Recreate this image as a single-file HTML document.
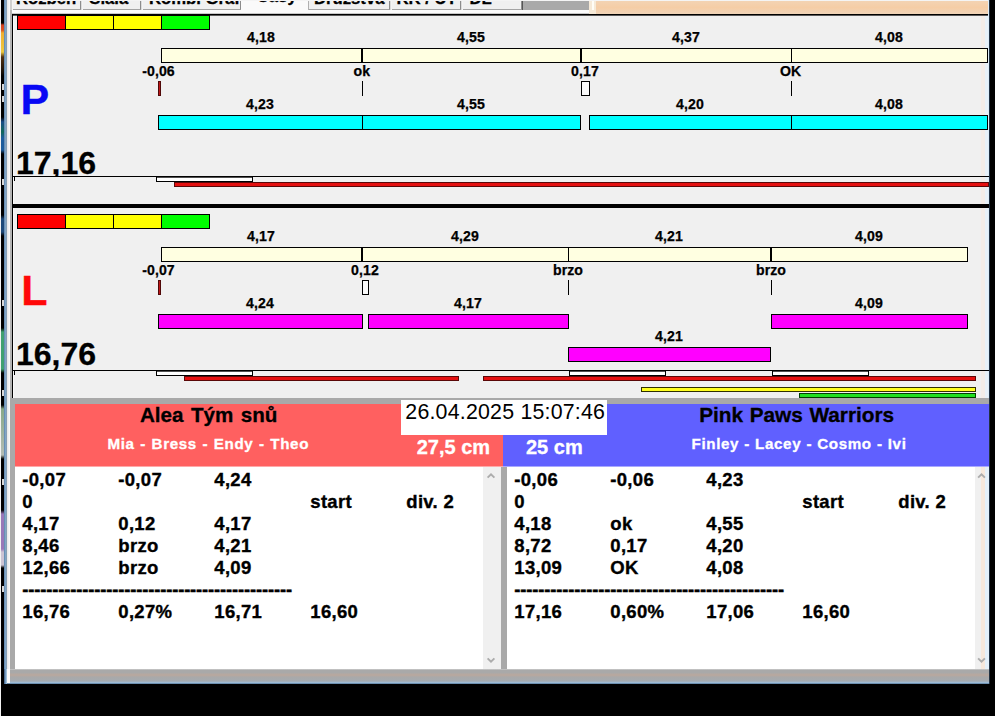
<!DOCTYPE html>
<html lang="cs"><head><meta charset="utf-8"><title>Časy</title>
<style>
html,body{margin:0;padding:0;}
body{width:995px;height:716px;position:relative;overflow:hidden;background:#f0f0f0;font-family:"Liberation Sans", Arial, sans-serif;}
.r{position:absolute;box-sizing:border-box;}
.t{position:absolute;line-height:1;white-space:pre;-webkit-text-stroke:0.3px currentColor;}
.c{position:absolute;line-height:22px;white-space:pre;font-weight:bold;font-size:18.5px;letter-spacing:0.3px;color:#000;-webkit-text-stroke:0.35px #000;}
</style></head><body>
<div class="r" style="left:0px;top:0px;width:995px;height:14px;background:#f4f4f4;"></div>
<div class="r" style="left:13px;top:0px;width:68px;height:10px;background:#f0f0f0;border-right:1px solid #8c8c8c;border-bottom:1px solid #a4a4a4;box-shadow:1px 0 0 #dcdcdc;"></div>
<div class="t" style="top:-9.04px;font-size:16.7px;color:#000;font-weight:bold;left:16.00px;">Rozběh</div>
<div class="r" style="left:83px;top:0px;width:58px;height:10px;background:#f0f0f0;border-right:1px solid #8c8c8c;border-bottom:1px solid #a4a4a4;box-shadow:1px 0 0 #dcdcdc;"></div>
<div class="t" style="top:-9.04px;font-size:16.7px;color:#000;font-weight:bold;left:89.30px;">Siala</div>
<div class="r" style="left:143px;top:0px;width:98px;height:10px;background:#f0f0f0;border-right:1px solid #8c8c8c;border-bottom:1px solid #a4a4a4;box-shadow:1px 0 0 #dcdcdc;"></div>
<div class="t" style="top:-9.04px;font-size:16.7px;color:#000;font-weight:bold;left:149.00px;">Kombi Graf</div>
<div class="r" style="left:309px;top:0px;width:81px;height:10px;background:#f0f0f0;border-right:1px solid #8c8c8c;border-bottom:1px solid #a4a4a4;box-shadow:1px 0 0 #dcdcdc;"></div>
<div class="t" style="top:-9.04px;font-size:16.7px;color:#000;font-weight:bold;left:314.00px;">Družstva</div>
<div class="r" style="left:392px;top:0px;width:69px;height:10px;background:#f0f0f0;border-right:1px solid #8c8c8c;border-bottom:1px solid #a4a4a4;box-shadow:1px 0 0 #dcdcdc;"></div>
<div class="t" style="top:-9.04px;font-size:16.7px;color:#000;font-weight:bold;left:396.50px;">KK / UT</div>
<div class="r" style="left:463px;top:0px;width:59px;height:10px;background:#f0f0f0;border-right:1px solid #8c8c8c;border-bottom:1px solid #a4a4a4;box-shadow:1px 0 0 #dcdcdc;"></div>
<div class="t" style="top:-9.04px;font-size:16.7px;color:#000;font-weight:bold;left:469.50px;">DL</div>
<div class="r" style="left:241px;top:0px;width:68px;height:14px;background:#fafafa;border-right:1px solid #b0b0b0;"></div>
<div class="t" style="top:-11.44px;font-size:16.7px;color:#000;font-weight:bold;left:256.80px;">Časy</div>
<div class="r" style="left:522px;top:1px;width:67px;height:9px;background:#a9a9a9;border-left:1px solid #555;"></div>
<div class="r" style="left:589px;top:0px;width:7px;height:14px;background:#f6ead8;"></div>
<div class="r" style="left:592px;top:1px;width:2px;height:9px;background:#fffdf6;"></div>
<div class="r" style="left:596px;top:1px;width:393px;height:13px;background:linear-gradient(#f3d3b3,#f5cda6 50%,#f0d4b8);"></div>
<div class="r" style="left:0px;top:0px;width:995px;height:1px;background:#f4f4f4;"></div>
<div class="r" style="left:12px;top:10px;width:577px;height:3px;background:#fbfbfb;"></div>
<div class="r" style="left:12px;top:13px;width:577px;height:1px;background:#c8c8c8;"></div>
<div class="r" style="left:12px;top:14px;width:977px;height:1px;background:#000;"></div>
<div class="r" style="left:12px;top:15px;width:977px;height:1px;background:#5a5a5a;"></div>
<div class="r" style="left:0px;top:0px;width:1px;height:716px;background:#f2f2f2;"></div>
<div class="r" style="left:1px;top:0px;width:3px;height:716px;background:linear-gradient(#000 0px,#000 23px,#d04020 25px,#d85020 30px,#f0b030 33px,#ecc840 52px,#503010 57px,#181008 72px,#000 76px,#000 117px,#184c88 122px,#106858 132px,#1c5c9c 138px,#1c5c9c 150px,#000 154px,#000 215px,#1c4878 219px,#1c4878 232px,#000 236px,#000 328px,#40a070 332px,#40a070 369px,#000 373px,#000 405px,#88a888 409px,#b4bcb4 455px,#000 459px,#000 510px,#9878b8 514px,#9878b8 549px,#ccc4d4 552px,#ccc4d4 565px,#000 568px,#000 716px);"></div>
<div class="r" style="left:4px;top:0px;width:3px;height:684px;background:linear-gradient(90deg,#5c84ac,#84a8c8 55%,#8898a8);"></div>
<div class="r" style="left:2px;top:84px;width:2px;height:6px;background:#d8d8d8;"></div>
<div class="r" style="left:2px;top:96px;width:2px;height:6px;background:#d8d8d8;"></div>
<div class="r" style="left:2px;top:179px;width:2px;height:6px;background:#d8d8d8;"></div>
<div class="r" style="left:2px;top:300px;width:2px;height:6px;background:#d8d8d8;"></div>
<div class="r" style="left:2px;top:390px;width:2px;height:6px;background:#d8d8d8;"></div>
<div class="r" style="left:2px;top:479px;width:2px;height:6px;background:#d8d8d8;"></div>
<div class="r" style="left:2px;top:586px;width:2px;height:6px;background:#d8d8d8;"></div>
<div class="r" style="left:7px;top:0px;width:3px;height:684px;background:linear-gradient(90deg,#e6e6e6,#fcfcfc);"></div>
<div class="r" style="left:10px;top:0px;width:2px;height:398px;background:#b4b4b4;"></div>
<div class="r" style="left:10px;top:0px;width:2px;height:10px;background:#cfcfcf;"></div>
<div class="r" style="left:12px;top:14px;width:1px;height:384px;background:#000;"></div>
<div class="r" style="left:13px;top:16px;width:1px;height:382px;background:#fafafa;"></div>
<div class="r" style="left:988px;top:0px;width:1px;height:684px;background:#dcecf8;"></div>
<div class="r" style="left:989px;top:0px;width:6px;height:716px;background:#000;"></div>
<div class="r" style="left:989px;top:0px;width:1px;height:684px;background:#203040;"></div>
<div class="r" style="left:981px;top:16px;width:4px;height:382px;background:#f3ede8;"></div>
<div class="r" style="left:985px;top:16px;width:3px;height:382px;background:#e8f1f8;"></div>
<div class="r" style="left:17px;top:15px;width:49px;height:15px;background:#ff0000;box-shadow:inset 0 0 0 1px #000;"></div>
<div class="r" style="left:65px;top:15px;width:49px;height:15px;background:#ffff00;box-shadow:inset 0 0 0 1px #000;"></div>
<div class="r" style="left:113px;top:15px;width:49px;height:15px;background:#ffff00;box-shadow:inset 0 0 0 1px #000;"></div>
<div class="r" style="left:161px;top:15px;width:49px;height:15px;background:#00ff00;box-shadow:inset 0 0 0 1px #000;"></div>
<div class="r" style="left:161px;top:48px;width:202px;height:15px;background:#ffffe1;box-shadow:inset 0 0 0 1px #000;"></div>
<div class="r" style="left:362px;top:48px;width:220px;height:15px;background:#ffffe1;box-shadow:inset 0 0 0 1px #000;"></div>
<div class="r" style="left:581px;top:48px;width:211px;height:15px;background:#ffffe1;box-shadow:inset 0 0 0 1px #000;"></div>
<div class="r" style="left:791px;top:48px;width:197px;height:15px;background:#ffffe1;box-shadow:inset 0 0 0 1px #000;"></div>
<div class="r" style="left:361px;top:48px;width:2px;height:15px;background:#000;"></div>
<div class="r" style="left:580px;top:48px;width:2px;height:15px;background:#000;"></div>
<div class="t" style="top:30.36px;font-size:14.1px;color:#000;font-weight:bold;left:61.00px;width:400px;text-align:center;letter-spacing:0.1px;-webkit-text-stroke:0.25px #000;">4,18</div>
<div class="t" style="top:30.36px;font-size:14.1px;color:#000;font-weight:bold;left:271.00px;width:400px;text-align:center;letter-spacing:0.1px;-webkit-text-stroke:0.25px #000;">4,55</div>
<div class="t" style="top:30.36px;font-size:14.1px;color:#000;font-weight:bold;left:486.00px;width:400px;text-align:center;letter-spacing:0.1px;-webkit-text-stroke:0.25px #000;">4,37</div>
<div class="t" style="top:30.36px;font-size:14.1px;color:#000;font-weight:bold;left:689.00px;width:400px;text-align:center;letter-spacing:0.1px;-webkit-text-stroke:0.25px #000;">4,08</div>
<div class="t" style="top:63.66px;font-size:14.1px;color:#000;font-weight:bold;left:-41.50px;width:400px;text-align:center;letter-spacing:0.1px;-webkit-text-stroke:0.25px #000;">-0,06</div>
<div class="t" style="top:63.66px;font-size:14.1px;color:#000;font-weight:bold;left:161.80px;width:400px;text-align:center;letter-spacing:0.1px;-webkit-text-stroke:0.25px #000;">ok</div>
<div class="t" style="top:63.66px;font-size:14.1px;color:#000;font-weight:bold;left:385.00px;width:400px;text-align:center;letter-spacing:0.1px;-webkit-text-stroke:0.25px #000;">0,17</div>
<div class="t" style="top:63.66px;font-size:14.1px;color:#000;font-weight:bold;left:590.70px;width:400px;text-align:center;letter-spacing:0.1px;-webkit-text-stroke:0.25px #000;">OK</div>
<div class="r" style="left:158px;top:81px;width:3px;height:15px;background:#c01818;box-shadow:inset 0 0 0 1px #500808;"></div>
<div class="r" style="left:362px;top:81px;width:1px;height:15px;background:#000;"></div>
<div class="r" style="left:581px;top:81px;width:9px;height:15px;background:#fafafa;box-shadow:inset 0 0 0 1px #000;"></div>
<div class="r" style="left:791px;top:81px;width:1px;height:15px;background:#000;"></div>
<div class="t" style="top:97.46px;font-size:14.1px;color:#000;font-weight:bold;left:60.00px;width:400px;text-align:center;letter-spacing:0.1px;-webkit-text-stroke:0.25px #000;">4,23</div>
<div class="t" style="top:97.46px;font-size:14.1px;color:#000;font-weight:bold;left:271.00px;width:400px;text-align:center;letter-spacing:0.1px;-webkit-text-stroke:0.25px #000;">4,55</div>
<div class="t" style="top:97.46px;font-size:14.1px;color:#000;font-weight:bold;left:490.00px;width:400px;text-align:center;letter-spacing:0.1px;-webkit-text-stroke:0.25px #000;">4,20</div>
<div class="t" style="top:97.46px;font-size:14.1px;color:#000;font-weight:bold;left:689.00px;width:400px;text-align:center;letter-spacing:0.1px;-webkit-text-stroke:0.25px #000;">4,08</div>
<div class="r" style="left:158px;top:115px;width:205px;height:15px;background:#00ffff;box-shadow:inset 0 0 0 1px #000;"></div>
<div class="r" style="left:362px;top:115px;width:219px;height:15px;background:#00ffff;box-shadow:inset 0 0 0 1px #000;"></div>
<div class="r" style="left:589px;top:115px;width:203px;height:15px;background:#00ffff;box-shadow:inset 0 0 0 1px #000;"></div>
<div class="r" style="left:791px;top:115px;width:197px;height:15px;background:#00ffff;box-shadow:inset 0 0 0 1px #000;"></div>
<div class="t" style="top:77.60px;font-size:43px;color:#0808f4;font-weight:bold;left:20.40px;">P</div>
<div class="r" style="left:13px;top:140px;width:200px;height:36px;overflow:hidden;">
<div class="t" style="left:3px;top:6.91px;font-size:32px;font-weight:bold;">17,16</div></div>
<div class="r" style="left:13px;top:176px;width:976px;height:1px;background:#000;"></div>
<div class="r" style="left:14px;top:176px;width:1px;height:5px;background:#000;"></div>
<div class="r" style="left:156px;top:176px;width:97px;height:6px;background:linear-gradient(#000 0,#000 1px,#505050 1px,#505050 2px,#fff 2px);box-shadow:inset 0 0 0 1px #000;"></div>
<div class="r" style="left:174px;top:182px;width:815px;height:5px;background:#e41010;box-shadow:inset 0 0 0 1px #5a0808;"></div>
<div class="r" style="left:12px;top:204px;width:977px;height:4px;background:#000;"></div>
<div class="r" style="left:17px;top:214px;width:49px;height:15px;background:#ff0000;box-shadow:inset 0 0 0 1px #000;"></div>
<div class="r" style="left:65px;top:214px;width:49px;height:15px;background:#ffff00;box-shadow:inset 0 0 0 1px #000;"></div>
<div class="r" style="left:113px;top:214px;width:49px;height:15px;background:#ffff00;box-shadow:inset 0 0 0 1px #000;"></div>
<div class="r" style="left:161px;top:214px;width:49px;height:15px;background:#00ff00;box-shadow:inset 0 0 0 1px #000;"></div>
<div class="r" style="left:161px;top:247px;width:202px;height:15px;background:#ffffe1;box-shadow:inset 0 0 0 1px #000;"></div>
<div class="r" style="left:362px;top:247px;width:207px;height:15px;background:#ffffe1;box-shadow:inset 0 0 0 1px #000;"></div>
<div class="r" style="left:568px;top:247px;width:204px;height:15px;background:#ffffe1;box-shadow:inset 0 0 0 1px #000;"></div>
<div class="r" style="left:771px;top:247px;width:197px;height:15px;background:#ffffe1;box-shadow:inset 0 0 0 1px #000;"></div>
<div class="r" style="left:361px;top:247px;width:2px;height:15px;background:#000;"></div>
<div class="r" style="left:770px;top:247px;width:2px;height:15px;background:#000;"></div>
<div class="t" style="top:229.36px;font-size:14.1px;color:#000;font-weight:bold;left:61.00px;width:400px;text-align:center;letter-spacing:0.1px;-webkit-text-stroke:0.25px #000;">4,17</div>
<div class="t" style="top:229.36px;font-size:14.1px;color:#000;font-weight:bold;left:265.00px;width:400px;text-align:center;letter-spacing:0.1px;-webkit-text-stroke:0.25px #000;">4,29</div>
<div class="t" style="top:229.36px;font-size:14.1px;color:#000;font-weight:bold;left:469.00px;width:400px;text-align:center;letter-spacing:0.1px;-webkit-text-stroke:0.25px #000;">4,21</div>
<div class="t" style="top:229.36px;font-size:14.1px;color:#000;font-weight:bold;left:669.00px;width:400px;text-align:center;letter-spacing:0.1px;-webkit-text-stroke:0.25px #000;">4,09</div>
<div class="t" style="top:262.86px;font-size:14.1px;color:#000;font-weight:bold;left:-41.50px;width:400px;text-align:center;letter-spacing:0.1px;-webkit-text-stroke:0.25px #000;">-0,07</div>
<div class="t" style="top:262.86px;font-size:14.1px;color:#000;font-weight:bold;left:165.00px;width:400px;text-align:center;letter-spacing:0.1px;-webkit-text-stroke:0.25px #000;">0,12</div>
<div class="t" style="top:262.86px;font-size:14.1px;color:#000;font-weight:bold;left:368.00px;width:400px;text-align:center;letter-spacing:0.1px;-webkit-text-stroke:0.25px #000;">brzo</div>
<div class="t" style="top:262.86px;font-size:14.1px;color:#000;font-weight:bold;left:571.00px;width:400px;text-align:center;letter-spacing:0.1px;-webkit-text-stroke:0.25px #000;">brzo</div>
<div class="r" style="left:158px;top:280px;width:3px;height:15px;background:#c01818;box-shadow:inset 0 0 0 1px #500808;"></div>
<div class="r" style="left:362px;top:280px;width:7px;height:15px;background:#fafafa;box-shadow:inset 0 0 0 1px #000;"></div>
<div class="r" style="left:568px;top:280px;width:1px;height:15px;background:#000;"></div>
<div class="r" style="left:771px;top:280px;width:1px;height:15px;background:#000;"></div>
<div class="t" style="top:296.46px;font-size:14.1px;color:#000;font-weight:bold;left:60.00px;width:400px;text-align:center;letter-spacing:0.1px;-webkit-text-stroke:0.25px #000;">4,24</div>
<div class="t" style="top:296.46px;font-size:14.1px;color:#000;font-weight:bold;left:268.00px;width:400px;text-align:center;letter-spacing:0.1px;-webkit-text-stroke:0.25px #000;">4,17</div>
<div class="t" style="top:296.46px;font-size:14.1px;color:#000;font-weight:bold;left:669.00px;width:400px;text-align:center;letter-spacing:0.1px;-webkit-text-stroke:0.25px #000;">4,09</div>
<div class="r" style="left:158px;top:314px;width:205px;height:15px;background:#ff00ff;box-shadow:inset 0 0 0 1px #000;"></div>
<div class="r" style="left:368px;top:314px;width:201px;height:15px;background:#ff00ff;box-shadow:inset 0 0 0 1px #000;"></div>
<div class="r" style="left:771px;top:314px;width:197px;height:15px;background:#ff00ff;box-shadow:inset 0 0 0 1px #000;"></div>
<div class="t" style="top:329.46px;font-size:14.1px;color:#000;font-weight:bold;left:469.00px;width:400px;text-align:center;letter-spacing:0.1px;-webkit-text-stroke:0.25px #000;">4,21</div>
<div class="r" style="left:568px;top:347px;width:203px;height:15px;background:#ff00ff;box-shadow:inset 0 0 0 1px #000;"></div>
<div class="t" style="top:268.60px;font-size:43px;color:#ff0808;font-weight:bold;left:21.20px;">L</div>
<div class="r" style="left:13px;top:330px;width:200px;height:40px;overflow:hidden;">
<div class="t" style="left:3px;top:7.61px;font-size:32px;font-weight:bold;">16,76</div></div>
<div class="r" style="left:13px;top:370px;width:976px;height:1px;background:#000;"></div>
<div class="r" style="left:14px;top:370px;width:1px;height:5px;background:#000;"></div>
<div class="r" style="left:156px;top:370px;width:97px;height:6px;background:linear-gradient(#000 0,#000 1px,#505050 1px,#505050 2px,#fff 2px);box-shadow:inset 0 0 0 1px #000;"></div>
<div class="r" style="left:569px;top:370px;width:97px;height:6px;background:linear-gradient(#000 0,#000 1px,#505050 1px,#505050 2px,#fff 2px);box-shadow:inset 0 0 0 1px #000;"></div>
<div class="r" style="left:772px;top:370px;width:97px;height:6px;background:linear-gradient(#000 0,#000 1px,#505050 1px,#505050 2px,#fff 2px);box-shadow:inset 0 0 0 1px #000;"></div>
<div class="r" style="left:184px;top:376px;width:275px;height:5px;background:#e41010;box-shadow:inset 0 0 0 1px #5a0808;"></div>
<div class="r" style="left:483px;top:376px;width:493px;height:5px;background:#e41010;box-shadow:inset 0 0 0 1px #5a0808;"></div>
<div class="r" style="left:641px;top:387px;width:335px;height:5px;background:#ffff20;box-shadow:inset 0 0 0 1px #303000;"></div>
<div class="r" style="left:799px;top:393px;width:177px;height:5px;background:#20e020;box-shadow:inset 0 0 0 1px #004000;"></div>
<div class="r" style="left:10px;top:398px;width:979px;height:6px;background:#a9a9a9;"></div>
<div class="r" style="left:10px;top:404px;width:5px;height:280px;background:#a9a9a9;"></div>
<div class="r" style="left:15px;top:404px;width:488px;height:63px;background:linear-gradient(#ff6060 0,#ff6060 62px,#ffa8a8 62px);"></div>
<div class="r" style="left:503px;top:404px;width:486px;height:63px;background:linear-gradient(#6060ff 0,#6060ff 62px,#a8a8ff 62px);"></div>
<div class="r" style="left:401px;top:400px;width:206px;height:35px;background:#fff;"></div>
<div class="t" style="top:401.94px;font-size:21.33px;color:#000;font-weight:normal;left:405.30px;letter-spacing:0.22px;-webkit-text-stroke:0;">26.04.2025 15:07:46</div>
<div class="t" style="top:404.96px;font-size:20.6px;color:#000;font-weight:bold;left:8.70px;width:400px;text-align:center;word-spacing:1.8px;">Alea Tým snů</div>
<div class="t" style="top:436.43px;font-size:15.2px;color:#fff;font-weight:bold;left:8.30px;width:400px;text-align:center;letter-spacing:0.64px;word-spacing:0.7px;">Mia - Bress - Endy - Theo</div>
<div class="t" style="top:436.87px;font-size:20px;color:#fff;font-weight:bold;left:416.70px;">27,5 cm</div>
<div class="t" style="top:404.79px;font-size:20.8px;color:#000;font-weight:bold;left:596.70px;width:400px;text-align:center;word-spacing:0.8px;">Pink Paws Warriors</div>
<div class="t" style="top:436.43px;font-size:15.2px;color:#fff;font-weight:bold;left:599.00px;width:400px;text-align:center;letter-spacing:0.62px;word-spacing:0.3px;">Finley - Lacey - Cosmo - Ivi</div>
<div class="t" style="top:436.87px;font-size:20px;color:#fff;font-weight:bold;left:526.00px;">25 cm</div>
<div class="r" style="left:15px;top:467px;width:486px;height:202px;background:#fff;"></div>
<div class="r" style="left:483px;top:467px;width:18px;height:202px;background:#f0f0f0;"></div>
<div class="r" style="left:501px;top:467px;width:6px;height:202px;background:#a9a9a9;"></div>
<div class="r" style="left:507px;top:467px;width:482px;height:202px;background:#fff;"></div>
<div class="r" style="left:975px;top:467px;width:13px;height:202px;background:#f0f0f0;"></div>
<div class="r" style="left:981px;top:467px;width:4px;height:202px;background:#f6e8dc;"></div>
<div class="r" style="left:985px;top:467px;width:4px;height:202px;background:#e4f0fa;"></div>
<svg class="r" style="left:0;top:0;" width="995" height="716"><path d="M487.6,477.7 L491,474.3 L494.4,477.7" fill="none" stroke="#acacac" stroke-width="1.9"/></svg>
<svg class="r" style="left:0;top:0;" width="995" height="716"><path d="M487.6,658.3 L491,661.7 L494.4,658.3" fill="none" stroke="#acacac" stroke-width="1.9"/></svg>
<svg class="r" style="left:0;top:0;" width="995" height="716"><path d="M978.1,477.7 L981.5,474.3 L984.9,477.7" fill="none" stroke="#acacac" stroke-width="1.9"/></svg>
<svg class="r" style="left:0;top:0;" width="995" height="716"><path d="M978.1,658.3 L981.5,661.7 L984.9,658.3" fill="none" stroke="#acacac" stroke-width="1.9"/></svg>
<div class="c" style="left:22.3px;top:469.19px;">-0,07</div>
<div class="c" style="left:118.3px;top:469.19px;">-0,07</div>
<div class="c" style="left:214.3px;top:469.19px;">4,24</div>
<div class="c" style="left:22.3px;top:491.19px;">0</div>
<div class="c" style="left:310.3px;top:491.19px;">start</div>
<div class="c" style="left:406.3px;top:491.19px;">div. 2</div>
<div class="c" style="left:22.3px;top:513.19px;">4,17</div>
<div class="c" style="left:118.3px;top:513.19px;">0,12</div>
<div class="c" style="left:214.3px;top:513.19px;">4,17</div>
<div class="c" style="left:22.3px;top:535.19px;">8,46</div>
<div class="c" style="left:118.3px;top:535.19px;">brzo</div>
<div class="c" style="left:214.3px;top:535.19px;">4,21</div>
<div class="c" style="left:22.3px;top:557.19px;">12,66</div>
<div class="c" style="left:118.3px;top:557.19px;">brzo</div>
<div class="c" style="left:214.3px;top:557.19px;">4,09</div>
<div class="c" style="left:22.3px;top:579.19px;letter-spacing:-0.167px;">---------------------------------------------</div>
<div class="c" style="left:22.3px;top:601.19px;">16,76</div>
<div class="c" style="left:118.3px;top:601.19px;">0,27%</div>
<div class="c" style="left:214.3px;top:601.19px;">16,71</div>
<div class="c" style="left:310.3px;top:601.19px;">16,60</div>
<div class="c" style="left:514.3px;top:469.19px;">-0,06</div>
<div class="c" style="left:610.3px;top:469.19px;">-0,06</div>
<div class="c" style="left:706.3px;top:469.19px;">4,23</div>
<div class="c" style="left:514.3px;top:491.19px;">0</div>
<div class="c" style="left:802.3px;top:491.19px;">start</div>
<div class="c" style="left:898.3px;top:491.19px;">div. 2</div>
<div class="c" style="left:514.3px;top:513.19px;">4,18</div>
<div class="c" style="left:610.3px;top:513.19px;">ok</div>
<div class="c" style="left:706.3px;top:513.19px;">4,55</div>
<div class="c" style="left:514.3px;top:535.19px;">8,72</div>
<div class="c" style="left:610.3px;top:535.19px;">0,17</div>
<div class="c" style="left:706.3px;top:535.19px;">4,20</div>
<div class="c" style="left:514.3px;top:557.19px;">13,09</div>
<div class="c" style="left:610.3px;top:557.19px;">OK</div>
<div class="c" style="left:706.3px;top:557.19px;">4,08</div>
<div class="c" style="left:514.3px;top:579.19px;letter-spacing:-0.167px;">---------------------------------------------</div>
<div class="c" style="left:514.3px;top:601.19px;">17,16</div>
<div class="c" style="left:610.3px;top:601.19px;">0,60%</div>
<div class="c" style="left:706.3px;top:601.19px;">17,06</div>
<div class="c" style="left:802.3px;top:601.19px;">16,60</div>
<div class="r" style="left:4px;top:669px;width:985px;height:15px;background:linear-gradient(#d8d8d8 0,#a9a9a9 1px,#a9a9a9 4px,#b6a8a0 5px,#b6a8a0 6.5px,#a9a9a9 8px,#a6abb0 12px,#9cc0e0 14px,#406080 15px);"></div>
<div class="r" style="left:1px;top:684px;width:994px;height:32px;background:#000;"></div>
<div class="r" style="left:4px;top:669px;width:3px;height:15px;background:linear-gradient(90deg,#3c5a80,#7fa8cc 60%,#b8d0e4);"></div>
<div class="r" style="left:7px;top:669px;width:3px;height:14px;background:#fcfcfc;"></div>
</body></html>
